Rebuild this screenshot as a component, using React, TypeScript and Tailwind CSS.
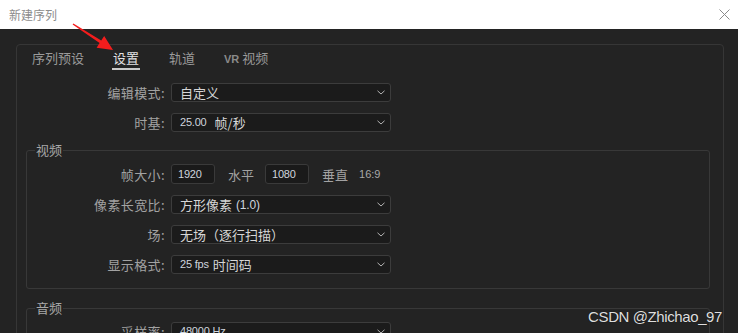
import React from "react";

const cjk = "font-['Noto_Sans_CJK_SC','Noto_Sans',sans-serif]";
const num = "font-['Liberation_Sans',Arial,sans-serif] text-[11px] tracking-[-0.2px] text-[#cfd5de]";

const Chevron = () => (
  <svg width="8" height="5" viewBox="0 0 8 5" className="shrink-0">
    <path d="M0.5 0.8 L4 4 L7.5 0.8" stroke="#b4b4b4" strokeWidth="1" fill="none" />
  </svg>
);

function Select({ children }: { children: React.ReactNode }) {
  return (
    <div className="w-[220px] h-[19px] ml-[6px] flex items-center justify-between bg-[#1b1b1b] border border-[#3c3c3c] rounded-[3px] pl-[8px] pr-[5px] text-[#d6d6d6] text-[13px] leading-none whitespace-nowrap">
      <span className="flex items-center">{children}</span>
      <Chevron />
    </div>
  );
}

function Row({ label, w, children, h = "h-[19px]" }: { label: string; w: string; children: React.ReactNode; h?: string }) {
  return (
    <div className={`flex items-center ${h}`}>
      <div className={`${w} text-right text-[13px] leading-none text-[#a2a2a2] tracking-[0.4px] whitespace-nowrap`}>{label}</div>
      {children}
    </div>
  );
}

const tabs = ["序列预设", "设置", "轨道", "VR 视频"];

export default function App() {
  return (
    <div className={`relative w-[738px] h-[333px] overflow-hidden bg-[#232323] ${cjk}`}>
      <div className="h-[29px] bg-white flex items-center justify-between pl-[9px] pr-[8px]">
        <span className="text-[12px] text-[#8c8c8c] leading-none">新建序列</span>
        <svg width="11" height="11" viewBox="0 0 11 11">
          <path d="M0.5 0.5 L10.5 10.5 M10.5 0.5 L0.5 10.5" stroke="#8a8a8a" strokeWidth="1" />
        </svg>
      </div>

      <div className="pt-[15px] pl-[16px] pr-[14px]">
        <div className="border border-[#363636] rounded-[4px] h-[320px]">
          <div className="flex gap-[28px] pl-[15px] pt-[4px]">
            {tabs.map((t, i) => (
              <div key={t} className="flex flex-col items-center">
                <span className={`text-[13px] leading-[18px] ${i === 1 ? "text-[#e2e2e2]" : "text-[#9a9a9a]"}`}>
                  {t === "VR 视频" ? (
                    <>
                      <span className="font-['Liberation_Sans',sans-serif] font-bold text-[11px] text-[#8a8a8a]">VR</span> 视频
                    </>
                  ) : (
                    t
                  )}
                </span>
                <div className={`mt-[1px] h-[2px] w-[28px] ${i === 1 ? "bg-[#c9c9c9]" : "bg-transparent"}`} />
              </div>
            ))}
          </div>

          <div className="mt-[12px] flex flex-col gap-[11px]">
            <Row label="编辑模式:" w="w-[148px]">
              <Select>自定义</Select>
            </Row>
            <Row label="时基:" w="w-[148px]">
              <Select>
                <span className={num}>25.00</span>
                <span className="ml-[8px]">帧/秒</span>
              </Select>
            </Row>
          </div>

          <fieldset className="mt-[9px] ml-[9px] mr-[13px] border border-[#383838] rounded-[3px] pb-[14px]">
            <legend className="ml-[8px] px-[1px] text-[13px] leading-[18px] text-[#a8a8a8]">视频</legend>
            <div className="mt-[5px] flex flex-col gap-[11px]">
              <Row label="帧大小:" w="w-[138px]" h="h-[20px]">
                <div className={`ml-[6px] w-[44px] h-[20px] flex items-center pl-[6px] bg-[#1a1a1a] border border-[#3a3a3a] rounded-[3px] ${num}`}>1920</div>
                <span className="ml-[13px] text-[13px] leading-none text-[#a2a2a2]">水平</span>
                <div className={`ml-[11px] w-[44px] h-[20px] flex items-center pl-[6px] bg-[#1a1a1a] border border-[#3a3a3a] rounded-[3px] ${num}`}>1080</div>
                <span className="ml-[13px] text-[13px] leading-none text-[#a2a2a2]">垂直</span>
                <span className="ml-[11px] font-['Liberation_Sans',sans-serif] text-[11px] text-[#a8a8a8]">16:9</span>
              </Row>
              <Row label="像素长宽比:" w="w-[138px]">
                <Select>
                  方形像素<span className={`ml-[4px] ${num} text-[12px]`}>(1.0)</span>
                </Select>
              </Row>
              <Row label="场:" w="w-[138px]">
                <Select>无场（逐行扫描）</Select>
              </Row>
              <Row label="显示格式:" w="w-[138px]">
                <Select>
                  <span className={num}>25 fps</span>
                  <span className="ml-[4px]">时间码</span>
                </Select>
              </Row>
            </div>
          </fieldset>

          <fieldset className="mt-[10px] ml-[9px] mr-[13px] border border-[#383838] rounded-[3px] pb-[14px]">
            <legend className="ml-[8px] px-[1px] text-[13px] leading-[18px] text-[#a8a8a8]">音频</legend>
            <div className="mt-[5px] flex flex-col gap-[11px]">
              <Row label="采样率:" w="w-[138px]">
                <Select>
                  <span className={num}>48000 Hz</span>
                </Select>
              </Row>
            </div>
          </fieldset>
        </div>
      </div>

      <svg className="absolute left-0 top-0 pointer-events-none" width="130" height="60" viewBox="0 0 130 60">
        <polygon points="72.6,24.5 73.4,23.5 101.2,40.5 104.2,35.9 113,50 96.6,47.7 99.6,43.1" fill="#f41d1d" />
      </svg>

      <div className="absolute right-[16px] bottom-[7px] font-['Liberation_Sans',Arial,sans-serif] text-[15px] leading-[18px] tracking-[-0.4px] text-[#dedede] [text-shadow:0_0_1px_rgba(0,0,0,0.6)]">
        CSDN @Zhichao_97
      </div>
    </div>
  );
}
